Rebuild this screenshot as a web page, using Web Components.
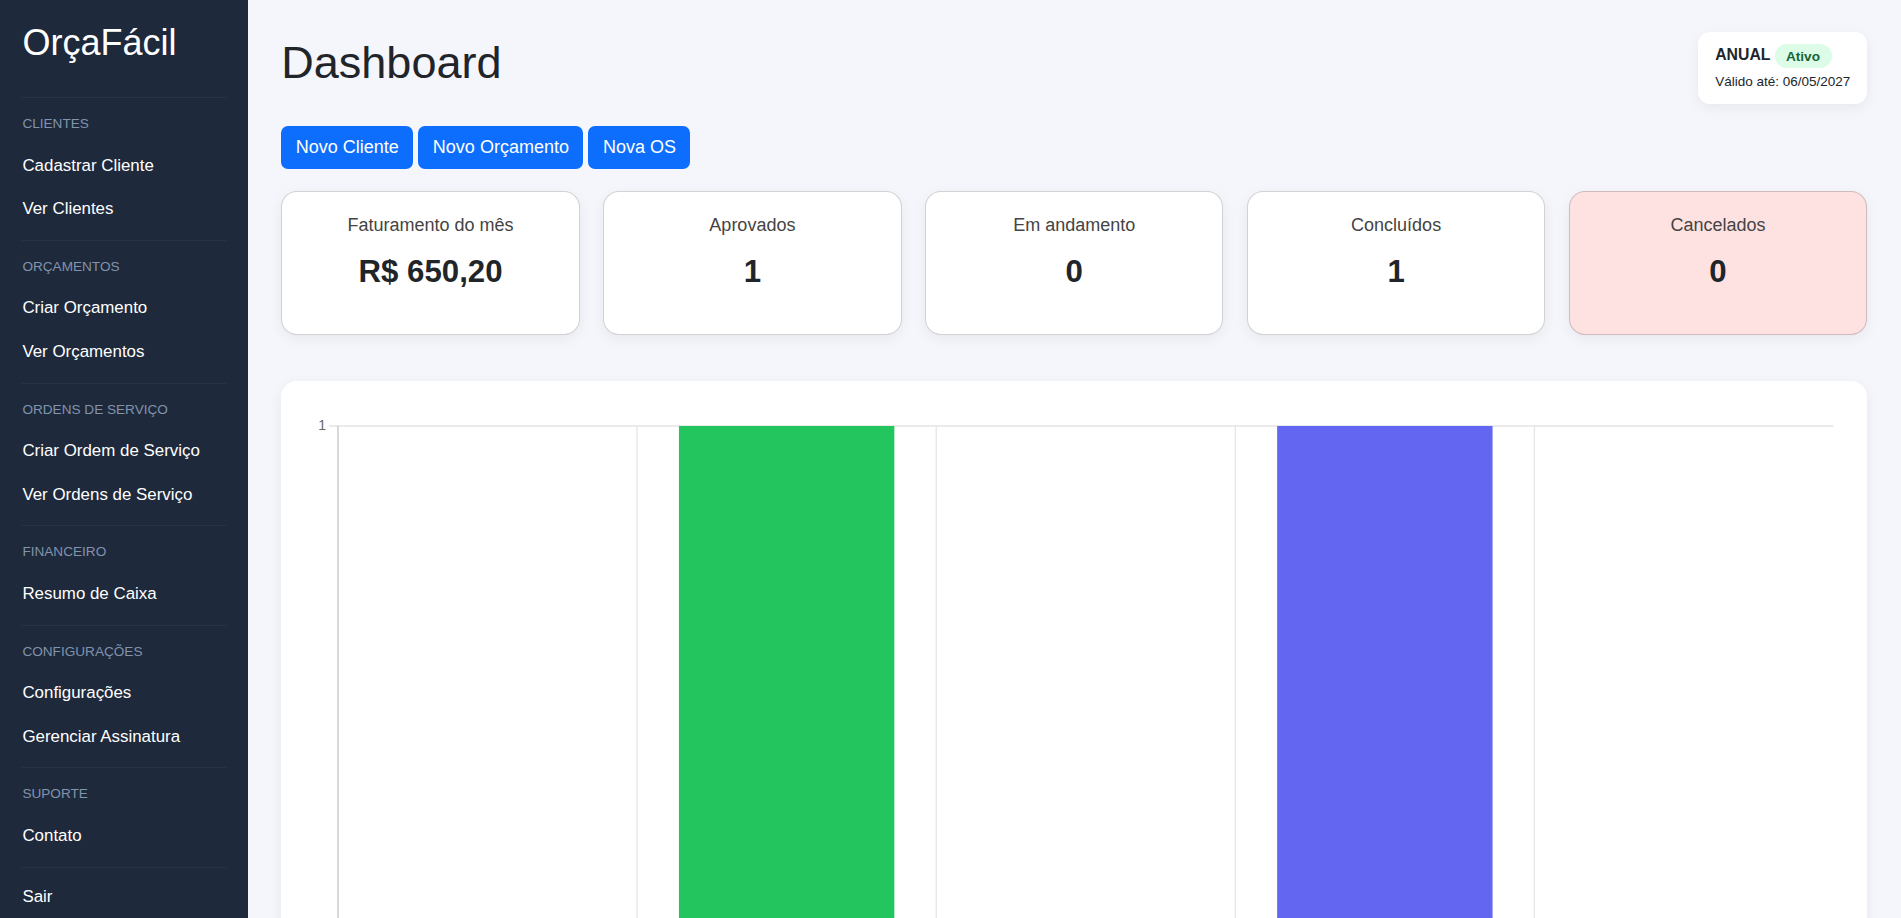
<!DOCTYPE html>
<html lang="pt-BR">
<head>
<meta charset="utf-8">
<title>OrçaFácil</title>
<style>
  html, body { margin: 0; height: 100%; overflow: hidden; }
  body {
    background: #f4f6fb;
    color: #212529;
    font-family: "Liberation Sans", Arial, sans-serif;
  }
</style>
</head>
<body>
<app-shell>
  <app-sidebar slot="side" brand="OrçaFácil">
    <nav-section label="CLIENTES">
      <nav-link>Cadastrar Cliente</nav-link>
      <nav-link>Ver Clientes</nav-link>
    </nav-section>
    <nav-section label="ORÇAMENTOS">
      <nav-link>Criar Orçamento</nav-link>
      <nav-link>Ver Orçamentos</nav-link>
    </nav-section>
    <nav-section label="ORDENS DE SERVIÇO">
      <nav-link>Criar Ordem de Serviço</nav-link>
      <nav-link>Ver Ordens de Serviço</nav-link>
    </nav-section>
    <nav-section label="FINANCEIRO">
      <nav-link>Resumo de Caixa</nav-link>
    </nav-section>
    <nav-section label="CONFIGURAÇÕES">
      <nav-link>Configurações</nav-link>
      <nav-link>Gerenciar Assinatura</nav-link>
    </nav-section>
    <nav-section label="SUPORTE">
      <nav-link>Contato</nav-link>
    </nav-section>
    <nav-section>
      <nav-link>Sair</nav-link>
    </nav-section>
  </app-sidebar>

  <page-header>
    <span slot="title">Dashboard</span>
    <plan-card slot="aside" plan="ANUAL" status="Ativo" until="Válido até: 06/05/2027"></plan-card>
  </page-header>

  <action-bar>
    <action-button>Novo Cliente</action-button>
    <action-button>Novo Orçamento</action-button>
    <action-button>Nova OS</action-button>
  </action-bar>

  <stat-grid>
    <stat-card label="Faturamento do mês" value="R$ 650,20"></stat-card>
    <stat-card label="Aprovados" value="1"></stat-card>
    <stat-card label="Em andamento" value="0"></stat-card>
    <stat-card label="Concluídos" value="1"></stat-card>
    <stat-card label="Cancelados" value="0" tone="danger"></stat-card>
  </stat-grid>

  <bar-chart></bar-chart>
</app-shell>

<script>
  class AppShell extends HTMLElement {
    constructor() {
      super()
      this.attachShadow({ mode: "open" })
    }

    connectedCallback() {
      this.shadowRoot.innerHTML = `
        <style>
          :host { display: flex; height: 100vh; }
          .side { flex: 0 0 248px; display: flex; }
          main { flex: 1; min-width: 0; padding: 32px 33.8px 0 33.3px; display: flex; flex-direction: column; }
        </style>
        <div class="side"><slot name="side"></slot></div>
        <main><slot></slot></main>
      `
    }
  }

  class AppSidebar extends HTMLElement {
    constructor() {
      super()
      this.attachShadow({ mode: "open" })
    }

    connectedCallback() {
      this.shadowRoot.innerHTML = `
        <style>
          :host {
            display: block;
            flex: 1;
            box-sizing: border-box;
            background: #1e293b;
            color: #fff;
            padding: 0 22.4px;
            overflow: hidden;
          }
          .brand {
            font-size: 36px;
            line-height: 42px;
            padding-top: 22px;
            height: 75px;
          }
        </style>
        <div class="brand">${this.getAttribute("brand")}</div>
        <slot></slot>
      `
    }
  }

  class NavSection extends HTMLElement {
    constructor() {
      super()
      this.attachShadow({ mode: "open" })
    }

    connectedCallback() {
      const label = this.getAttribute("label")
      this.shadowRoot.innerHTML = `
        <style>
          :host {
            display: block;
            border-top: 1px solid rgba(255, 255, 255, 0.05);
            padding: ${label ? 16 : 7.3}px 0 9px;
          }
          .label {
            font-size: 13.6px;
            line-height: 20.4px;
            color: #8193ad;
            margin-bottom: 9.6px;
          }
        </style>
        ${label ? `<div class="label">${label}</div>` : ""}
        <slot></slot>
      `
    }
  }

  class NavLink extends HTMLElement {
    constructor() {
      super()
      this.attachShadow({ mode: "open" })
    }

    connectedCallback() {
      this.shadowRoot.innerHTML = `
        <style>
          :host {
            display: block;
            font-size: 16.9px;
            line-height: 24px;
            padding: 9.7px 0;
            color: #fff;
          }
        </style>
        <slot></slot>
      `
    }
  }

  class PageHeader extends HTMLElement {
    constructor() {
      super()
      this.attachShadow({ mode: "open" })
    }

    connectedCallback() {
      this.shadowRoot.innerHTML = `
        <style>
          :host {
            display: flex;
            justify-content: space-between;
            align-items: flex-start;
            margin-bottom: 22px;
          }
          h1 { margin: 5px 0 0; font-size: 45px; line-height: 52.8px; font-weight: 400; }
        </style>
        <h1><slot name="title"></slot></h1>
        <slot name="aside"></slot>
      `
    }
  }

  class PlanCard extends HTMLElement {
    constructor() {
      super()
      this.attachShadow({ mode: "open" })
    }

    connectedCallback() {
      this.shadowRoot.innerHTML = `
        <style>
          :host {
            display: block;
            box-sizing: border-box;
            width: 169px;
            height: 72px;
            padding: 12px 0 0 17px;
            background: #fff;
            border-radius: 12px;
            box-shadow: 0 4px 14px rgba(0, 0, 0, 0.06);
          }
          .top { display: flex; align-items: flex-start; gap: 4px; height: 29px; }
          b { font-size: 15.8px; line-height: 21px; }
          .badge {
            width: 57px;
            height: 24px;
            line-height: 26px;
            text-align: center;
            border-radius: 12px;
            background: #dcfce7;
            color: #166534;
            font-size: 13.6px;
            font-weight: 700;
          }
          .until { font-size: 13.5px; line-height: 20px; margin-top: -1px; }
        </style>
        <div class="top"><b>${this.getAttribute("plan")}</b><span class="badge">${this.getAttribute("status")}</span></div>
        <div class="until">${this.getAttribute("until")}</div>
      `
    }
  }

  class ActionBar extends HTMLElement {
    constructor() {
      super()
      this.attachShadow({ mode: "open" })
    }

    connectedCallback() {
      this.shadowRoot.innerHTML = `
        <style>
          :host { display: flex; gap: 5px; margin-bottom: 22px; }
        </style>
        <slot></slot>
      `
    }
  }

  class ActionButton extends HTMLElement {
    constructor() {
      super()
      this.attachShadow({ mode: "open" })
    }

    connectedCallback() {
      this.shadowRoot.innerHTML = `
        <style>
          :host {
            display: block;
            background: #0d6efd;
            color: #fff;
            font-size: 18px;
            line-height: 27px;
            padding: 8px 14.5px;
            border-radius: 7px;
          }
        </style>
        <slot></slot>
      `
    }
  }

  class StatGrid extends HTMLElement {
    constructor() {
      super()
      this.attachShadow({ mode: "open" })
    }

    connectedCallback() {
      this.shadowRoot.innerHTML = `
        <style>
          :host {
            display: grid;
            grid-template-columns: repeat(5, 1fr);
            gap: 23.4px;
            margin-bottom: 45.5px;
          }
        </style>
        <slot></slot>
      `
    }
  }

  class StatCard extends HTMLElement {
    constructor() {
      super()
      this.attachShadow({ mode: "open" })
    }

    connectedCallback() {
      const danger = this.getAttribute("tone") === "danger"
      this.shadowRoot.innerHTML = `
        <style>
          :host {
            display: block;
            box-sizing: border-box;
            height: 144px;
            padding-top: 20px;
            text-align: center;
            background: ${danger ? "#fee2e2" : "#fff"};
            border: 1px solid rgba(0, 0, 0, 0.175);
            border-radius: 16px;
            box-shadow: 0 4px 14px rgba(0, 0, 0, 0.06);
          }
          .label { font-size: 18px; line-height: 27px; color: #444; }
          .value { font-size: 31.2px; line-height: 37px; font-weight: 700; margin-top: 14px; color: #212529; }
        </style>
        <div class="label">${this.getAttribute("label")}</div>
        <div class="value">${this.getAttribute("value")}</div>
      `
    }
  }

  class BarChart extends HTMLElement {
    constructor() {
      super()
      this.attachShadow({ mode: "open" })
    }

    connectedCallback() {
      // x positions are relative to the card, five gridlines and two bars
      const left = 57
      const step = 299.1
      const top = 45
      const bottom = 620
      let lines = ""
      for (let i = 0; i < 5; i++) {
        const x = left + i * step
        const color = i === 0 ? "#c4c4c4" : "#e6e6e6"
        lines += `<line x1="${x}" y1="${top}" x2="${x}" y2="${bottom}" stroke="${color}" stroke-width="1.3"/>`
      }
      const bar = (slot, color) => {
        const x = left + slot * step + (step - 215.4) / 2
        return `<rect x="${x}" y="${top}" width="215.4" height="${bottom - top}" fill="${color}"/>`
      }
      this.shadowRoot.innerHTML = `
        <style>
          :host {
            display: block;
            flex: none;
            height: 620px;
            background: #fff;
            border-radius: 16px;
            box-shadow: 0 4px 14px rgba(0, 0, 0, 0.06);
            overflow: hidden;
          }
          svg { display: block; }
          text { font: 14px "Liberation Sans", Arial, sans-serif; fill: #666; }
        </style>
        <svg width="100%" height="620">
          <line x1="48" y1="${top}" x2="1552.6" y2="${top}" stroke="#e4e4e4" stroke-width="1.3"/>
          ${lines}
          ${bar(1, "#22c55e")}
          ${bar(3, "#6366f1")}
          <text x="45" y="49" text-anchor="end">1</text>
        </svg>
      `
    }
  }

  customElements.define("app-shell", AppShell)
  customElements.define("app-sidebar", AppSidebar)
  customElements.define("nav-section", NavSection)
  customElements.define("nav-link", NavLink)
  customElements.define("page-header", PageHeader)
  customElements.define("plan-card", PlanCard)
  customElements.define("action-bar", ActionBar)
  customElements.define("action-button", ActionButton)
  customElements.define("stat-grid", StatGrid)
  customElements.define("stat-card", StatCard)
  customElements.define("bar-chart", BarChart)
</script>
</body>
</html>
